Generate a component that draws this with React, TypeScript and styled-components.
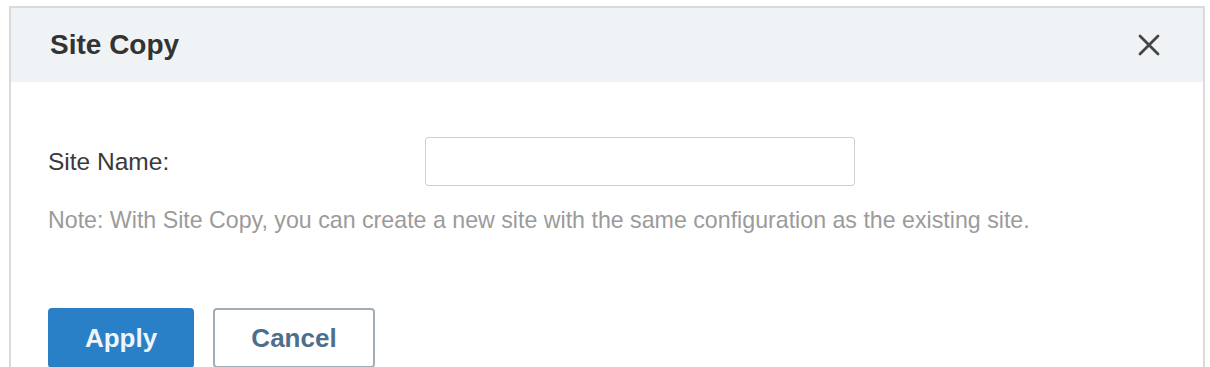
import React from 'react';
import styled, {createGlobalStyle} from "styled-components";

const GlobalStyle = createGlobalStyle`
  html, body {
    margin: 0;
    padding: 0;
    background: #ffffff;
    overflow: hidden;
  }
  body {
    font-family: "Liberation Sans", Arial, sans-serif;
  }
`

const CloseIcon = () => (
    <svg width="22" height="22" viewBox="0 0 22 22" fill="none">
        <path d="M2 2 L20 20 M20 2 L2 20" stroke="#454545" strokeWidth="2.8" strokeLinecap="round"/>
    </svg>
)

export default function App() {
    return (
        <>
            <GlobalStyle/>
            <Dialog>
                <Header>
                    <Title>Site Copy</Title>
                    <CloseButton aria-label="Close"><CloseIcon/></CloseButton>
                </Header>
                <Body>
                    <FieldRow>
                        <Label>Site Name:</Label>
                        <TextInput type="text"/>
                    </FieldRow>
                    <Note>Note: With Site Copy, you can create a new site with the same configuration as the existing site.</Note>
                    <Actions>
                        <Button primary>Apply</Button>
                        <Button>Cancel</Button>
                    </Actions>
                </Body>
            </Dialog>
        </>
    );
}

const Dialog = styled.div`
  margin: 6px 5px 0 9px;
  height: 361px;
  overflow: hidden;
  border: 2px solid #dadada;
  border-bottom: none;
  background: #ffffff;
  box-sizing: border-box;
`
const Header = styled.div`
  height: 74px;
  display: flex;
  align-items: center;
  justify-content: space-between;
  padding: 0 43px 0 39px;
  background-color: #eff3f6;
`
const Title = styled.h2`
  margin: 0;
  font-size: 28px;
  font-weight: 700;
  color: #333333;
`
const CloseButton = styled.button`
  display: flex;
  align-items: center;
  justify-content: center;
  padding: 0;
  border: none;
  background: transparent;
  cursor: pointer;
`
const Body = styled.div`
  padding: 55px 0 0 37px;
`
const FieldRow = styled.div`
  display: flex;
  align-items: center;
`
const Label = styled.label`
  width: 377px;
  font-size: 24.5px;
  color: #3a3a3a;
`
const TextInput = styled.input`
  width: 430px;
  height: 49px;
  box-sizing: border-box;
  border: 1.5px solid #cfcfcf;
  border-radius: 3px;
  outline: none;
  font-size: 20px;
`
const Note = styled.p`
  margin: 21px 0 0;
  font-size: 23.2px;
  line-height: 26px;
  color: #9b9b9b;
`
const Actions = styled.div`
  display: flex;
  gap: 19px;
  margin-top: 75px;
`
const Button = styled.button<{ primary?: boolean }>`
  flex-shrink: 0;
  height: 60px;
  width: ${p => p.primary ? '146px' : '162px'};
  box-sizing: border-box;
  border-radius: 4px;
  font-family: "Liberation Sans", Arial, sans-serif;
  font-size: 26px;
  font-weight: 700;
  cursor: pointer;
  border: 2px solid ${p => p.primary ? '#2a7fc4' : '#a3adb6'};
  background-color: ${p => p.primary ? '#2a80c6' : '#ffffff'};
  color: ${p => p.primary ? '#eef6fc' : '#4d6f8e'};
`
